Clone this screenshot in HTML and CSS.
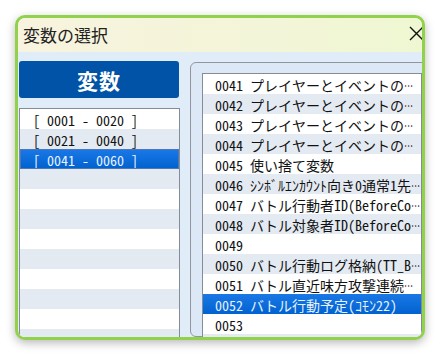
FILE: index.html
```html
<!DOCTYPE html>
<html lang="ja">
<head>
<meta charset="utf-8">
<link rel="stylesheet" href="styles.css">
</head>
<body>
<div class="window">
  <div class="titlebar">
    <span class="title">変数の選択</span>
    <svg class="close" width="15" height="15" viewBox="0 0 15 15"><path d="M1 1 L14 14 M14 1 L1 14" stroke="#111" stroke-width="1.4" fill="none"/></svg>
  </div>
  <div class="content">
    <div class="left">
      <div class="header">変数</div>
      <div class="list left-list">
        <div class="row">[ 0001 - 0020 ]</div>
        <div class="row">[ 0021 - 0040 ]</div>
        <div class="row sel">[ 0041 - 0060 ]</div>
        <div class="row"></div>
        <div class="row"></div>
        <div class="row"></div>
        <div class="row"></div>
        <div class="row"></div>
        <div class="row"></div>
        <div class="row"></div>
        <div class="row"></div>
        <div class="row"></div>
      </div>
    </div>
    <div class="frame">
      <div class="list right-list">
        <div class="row">0041 プレイヤーとイベントの<span class="ell">…</span></div>
        <div class="row">0042 プレイヤーとイベントの<span class="ell">…</span></div>
        <div class="row">0043 プレイヤーとイベントの<span class="ell">…</span></div>
        <div class="row">0044 プレイヤーとイベントの<span class="ell">…</span></div>
        <div class="row">0045 使い捨て変数</div>
        <div class="row">0046 ｼﾝﾎﾞﾙｴﾝｶｳﾝﾄ向き0通常1先<span class="ell">…</span></div>
        <div class="row">0047 バトル行動者ID(BeforeCo<span class="ell">…</span></div>
        <div class="row">0048 バトル対象者ID(BeforeCo<span class="ell">…</span></div>
        <div class="row">0049</div>
        <div class="row">0050 バトル行動ログ格納(TT_B<span class="ell">…</span></div>
        <div class="row">0051 バトル直近味方攻撃連続<span class="ell">…</span></div>
        <div class="row sel">0052 バトル行動予定(ｺﾓﾝ22)</div>
        <div class="row">0053</div>
        <div class="row"></div>
      </div>
    </div>
  </div>
</div>
</body>
</html>
```
FILE: styles.css
```css
html, body {
  margin: 0;
  padding: 0;
  background: #ffffff;
}
body {
  width: 441px;
  height: 356px;
  overflow: hidden;
  font-family: "Noto Sans CJK JP", sans-serif;
}
.window {
  box-sizing: border-box;
  margin: 15px 0 0 15px;
  width: 410px;
  height: 325px;
  border: 3px solid #92d14a;
  border-radius: 10px;
  overflow: hidden;
  background: #e1ecf9;
  box-shadow: 0 3px 10px rgba(0, 0, 0, 0.28);
  display: flex;
  flex-direction: column;
}
.titlebar {
  height: 34px;
  flex: none;
  display: flex;
  align-items: center;
  justify-content: space-between;
  padding-left: 5px;
  background: linear-gradient(90deg, #f8f3de 0%, #f3f5d8 60%, #eff7d2 100%);
}
.title {
  font-size: 17px;
  color: #222;
  margin-top: -1px;
}
.close {
  margin-right: -2px;
  margin-top: -3px;
}
.content {
  flex: 1;
  display: flex;
  gap: 11px;
  padding: 9px 0 0 1px;
  min-height: 0;
}
.left {
  width: 160px;
  flex: none;
  display: flex;
  flex-direction: column;
  gap: 10px;
}
.header {
  height: 37px;
  background: #0053a6;
  border-radius: 3px;
  color: #ffffff;
  font-weight: bold;
  font-size: 21px;
  display: flex;
  align-items: center;
  justify-content: center;
  letter-spacing: 1px;
}
.list {
  border: 1px solid #868c96;
  background: #ffffff;
  font-family: "Noto Sans Mono CJK JP", "Noto Sans CJK JP", monospace;
  font-size: 14px;
  color: #111;
  overflow: hidden;
}
.left-list {
  border-bottom: none;
  width: 159px;
  flex: 1;
}
.row {
  height: 20px;
  line-height: 20px;
  box-sizing: border-box;
  padding-top: 1px;
  white-space: nowrap;
  overflow: hidden;
}
.row:nth-child(even) {
  background: #e4eaf2;
}
.left-list .row {
  padding-left: 13px;
}
.right-list .row {
  padding-left: 12px;
}
.ell {
  display: inline-block;
  width: 9px;
  transform: scaleX(0.65);
  transform-origin: left center;
}
.row.sel {
  background: linear-gradient(180deg, #1a78e6 0%, #0062d0 100%);
  color: #e8f2ff;
}
.left-list .row.sel {
  border: 1px solid #4a78b8;
  padding-left: 12px;
  line-height: 18px;
}
.frame {
  flex: none;
  width: 250px;
  margin-top: 1px;
  border: 1px solid #8f969f;
  border-radius: 6px;
  background: #dde8f6;
  padding: 10px 0 0 11px;
}
.right-list {
  width: 218px;
  height: 300px;
}
```
